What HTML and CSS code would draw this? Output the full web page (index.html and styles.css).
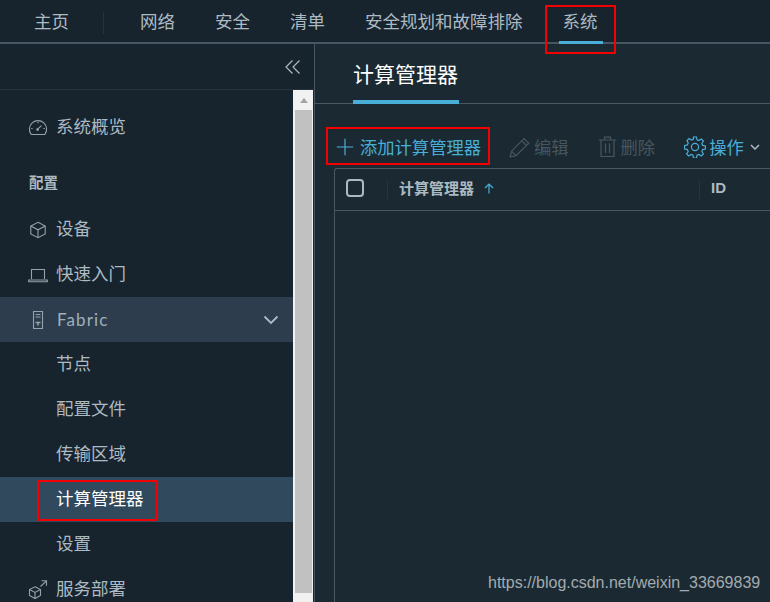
FILE: index.html
```html
<!DOCTYPE html>
<html lang="zh">
<head>
<meta charset="utf-8">
<title>计算管理器</title>
<link rel="stylesheet" href="styles.css">
</head>
<body>
<div class="app">
  <header class="topbar">
    <span class="topitem">主页</span>
    <span class="topdiv"></span>
    <nav class="topnav">
      <span class="topitem">网络</span>
      <span class="topitem">安全</span>
      <span class="topitem">清单</span>
      <span class="topitem">安全规划和故障排除</span>
      <span class="topitem active">系统</span>
    </nav>
  </header>
  <div class="main">
    <aside class="side">
      <div class="collapse">
        <svg class="collapse-icon" width="16" height="16" viewBox="0 0 16 16"><path d="M7.500 1.500 1 8l6.500 6.500M14.500 1.500 8 8l6.500 6.500"/></svg>
      </div>
      <div class="side-body">
        <nav class="sidenav">
          <div class="navrow first">
            <svg class="ico" width="20" height="20" viewBox="0 0 20 20"><path d="M3.200 16.500A8.600 8.600 0 1 1 16.800 16.500Z"/><path d="M8.800 11.800 13.500 7.600"/><circle cx="9.600" cy="11.600" r="1.300" class="fillc"/><path d="M3.200 10.500H4.600M15.400 10.500h1.400M10 4v1.200"/></svg>
            <span class="label">系统概览</span>
          </div>
          <div class="navlabel">配置</div>
          <div class="navrow">
            <svg class="ico" width="20" height="20" viewBox="0 0 20 20"><path d="M10 2.300 17.200 6v8L10 17.700 2.800 14V6Z"/><path d="M2.800 6 10 9.800 17.200 6M10 9.800v7.900"/></svg>
            <span class="label">设备</span>
          </div>
          <div class="navrow">
            <svg class="ico" width="20" height="20" viewBox="0 0 20 20"><path d="M3.500 14V4.500h13V14"/><path d="M.7 15h18.600v1.800H.7Z"/></svg>
            <span class="label">快速入门</span>
          </div>
          <div class="navrow open">
            <svg class="ico" width="20" height="20" viewBox="0 0 20 20"><path d="M5.500 1.500h9v17h-9Z"/><path d="M7.500 4.500h5M7.500 7h5"/><path d="M7.500 12.500h5M10 12.500v3" class="thick"/></svg>
            <span class="latin">Fabric</span>
            <svg class="chev" width="16" height="10" viewBox="0 0 16 10"><path d="M1.500 1.500 8 8l6.500-6.500"/></svg>
          </div>
          <div class="navrow sub"><span class="label">节点</span></div>
          <div class="navrow sub"><span class="label">配置文件</span></div>
          <div class="navrow sub"><span class="label">传输区域</span></div>
          <div class="navrow sub selected"><span class="label">计算管理器</span></div>
          <div class="navrow sub"><span class="label">设置</span></div>
          <div class="navrow">
            <svg class="ico" width="20" height="20" viewBox="0 0 20 20"><path d="M7 6.800 12.500 9.600V15.500L7 18.500 1.500 15.500V9.600Z"/><path d="M1.500 9.600 7 12.500 12.500 9.600M7 12.500v6"/><path d="M12.500 6.500 18.500.8M13.500.8h5v5"/></svg>
            <span class="label">服务部署</span>
          </div>
        </nav>
        <div class="scrollbar">
          <div class="scroll-arrow"></div>
          <div class="scroll-thumb"></div>
        </div>
      </div>
    </aside>
    <section class="content">
      <div class="tabs"><span class="tab">计算管理器</span></div>
      <div class="toolbar">
        <span class="tool primary add">
          <svg class="tool-ico" width="18" height="18" viewBox="0 0 18 18"><path d="M9 .8v16.400M.8 9h16.400"/></svg>
          <span>添加计算管理器</span>
        </span>
        <span class="tool disabled edit">
          <svg class="tool-ico" width="21" height="21" viewBox="0 0 21 21"><path d="M1.200 20 2.500 14.200 15 1.500 19.800 6.200 7 18.700Z"/><path d="M12.800 3.800 17.500 8.500M2.500 14.200 7 18.700"/></svg>
          <span>编辑</span>
        </span>
        <span class="tool disabled trash">
          <svg class="tool-ico" width="19" height="22" viewBox="0 0 19 22"><path d="M3 4.500V20.500h13V4.500M.8 4h17.400M6.500 4V1.200h6V4M7.500 7.500v9.500M11.500 7.500v9.500"/></svg>
          <span>删除</span>
        </span>
        <span class="tool primary ops">
          <svg class="tool-ico" width="22" height="22" viewBox="0 0 22 22"><circle cx="11" cy="11" r="3.600"/><path d="M9.500 1h3l.5 2.800 1.900.8 2.400-1.600 2.100 2.100-1.600 2.400.8 1.900 2.800.5v3.200l-2.800.5-.8 1.900 1.600 2.400-2.100 2.100-2.400-1.600-1.900.8-.5 2.800h-3l-.5-2.800-1.900-.8-2.400 1.600-2.100-2.100 1.600-2.400-.8-1.900-2.800-.5V9.400l2.800-.5.800-1.900L3 4.600 5.100 2.500l2.400 1.600 1.900-.8Z"/></svg>
          <span>操作</span>
          <svg class="ops-chev" width="10" height="6" viewBox="0 0 10 6"><path d="M1 1 5 5 9 1"/></svg>
        </span>
      </div>
      <div class="grid">
        <div class="grid-head">
          <span class="check-cell"><span class="check"></span></span>
          <span class="col col-name"><span class="col-text">计算管理器</span>
            <svg class="sort" width="10" height="11" viewBox="0 0 10 11"><path d="M5 10.500V1M1 5 5 1l4 4"/></svg>
          </span>
          <span class="col col-id"><span class="col-text">ID</span></span>
        </div>
      </div>
    </section>
  </div>

  <div class="mark mark-system"></div>
  <div class="mark mark-add"></div>
  <div class="mark mark-nav"></div>
  <div class="watermark">https://blog.csdn.net/weixin_33669839</div>
</div>
</body>
</html>
```

FILE: styles.css
```css
* { box-sizing: border-box; }
html, body { margin: 0; padding: 0; background: #1b2a32; }
body { font-family: "Noto Sans CJK SC", "Noto Sans", sans-serif; }

.app {
  position: relative;
  width: 770px;
  height: 602px;
  overflow: hidden;
  display: flex;
  flex-direction: column;
}

/* top bar */
.topbar {
  height: 44px;
  flex: none;
  display: flex;
  align-items: stretch;
  padding-left: 34px;
  background: #17232d;
  border-bottom: 2px solid #485764;
  font-size: 17.500px;
  color: #acbac3;
}
.topitem {
  display: flex;
  align-items: center;
  position: relative;
  height: 44px;
  line-height: 1;
  padding-bottom: 2px;
  white-space: nowrap;
}
.topdiv {
  width: 1px;
  height: 22px;
  margin: 12px 36px 0 34px;
  background: #26343f;
}
.topnav { display: flex; gap: 40px; }
.topitem.active::after {
  content: "";
  position: absolute;
  left: -4px;
  right: -5px;
  bottom: 0;
  height: 3px;
  background: #49afd9;
}

.main { flex: 1; min-height: 0; display: flex; }

/* side */
.side {
  width: 315px;
  flex: none;
  display: flex;
  flex-direction: column;
  background: #17232d;
  border-right: 1px solid #485764;
}
.collapse {
  height: 46px;
  flex: none;
  display: flex;
  justify-content: flex-end;
  padding: 15px 13px 0 0;
  border-bottom: 1px solid #26343f;
}
.collapse-icon { fill: none; stroke: #acbac3; stroke-width: 1.200; }
.side-body { flex: 1; min-height: 0; display: flex; }
.sidenav { width: 293px; flex: none; overflow: hidden; font-size: 17.500px; color: #acbac3; }
.navrow {
  height: 45px;
  display: flex;
  align-items: center;
  padding-left: 28px;
  line-height: 1;
  white-space: nowrap;
}
.navrow.first { margin-top: 15px; }
.label { margin-left: 8px; margin-bottom: 3px; }
.navrow.sub { padding-left: 48px; }
.navrow.open { background: #2d3d4d; }
.navrow.selected { background: #31495c; color: #fff; }
.navlabel {
  height: 57px;
  padding: 22px 0 0 29px;
  font-size: 14.500px;
  font-weight: 700;
  line-height: 20px;
  color: #acbac3;
}
.latin {
  margin-left: 9px;
  font-family: Lato, "Noto Sans", sans-serif;
  letter-spacing: 1.100px;
  font-size: 17px;
  color: #9fb0bb;
}
.ico { flex: none; fill: none; stroke: #95a3ab; stroke-width: 1.100; }
.ico .fillc { fill: #95a3ab; stroke: none; }
.ico .thick { stroke-width: 1.600; }
.chev {
  margin-left: auto;
  margin-right: 14px;
  fill: none;
  stroke: #acbac3;
  stroke-width: 1.800;
}

.scrollbar {
  width: 20px;
  flex: none;
  background: #f1f1f1;
  padding: 0 1px 0 2px;
}
.scroll-arrow {
  width: 0;
  height: 0;
  margin: 8px auto 7px;
  border-left: 4.500px solid transparent;
  border-right: 4.500px solid transparent;
  border-bottom: 5px solid #a3a3a3;
}
.scroll-thumb { height: 483px; background: #c1c1c1; }

/* content */
.content { flex: 1; min-width: 0; display: flex; flex-direction: column; background: #1b2a32; }
.tabs {
  height: 60px;
  flex: none;
  padding-left: 38px;
  border-bottom: 1px solid #485764;
  display: flex;
}
.tab {
  display: block;
  height: 60px;
  width: 106px;
  padding-top: 14px;
  font-size: 21px;
  line-height: 30px;
  color: #fff;
  border-bottom: 4px solid #49afd9;
  white-space: nowrap;
}
.toolbar {
  height: 64px;
  flex: none;
  display: flex;
  align-items: center;
  padding: 22px 0 0 21px;
  font-size: 17.300px;
  line-height: 1;
}
.tool { display: flex; align-items: center; white-space: nowrap; }
.tool-ico { flex: none; fill: none; stroke: currentColor; stroke-width: 1.200; }
.primary { color: #49afd9; }
.disabled { color: #46555f; }
.add { gap: 6px; }
.edit { gap: 4px; margin-left: 28px; }
.trash { gap: 4px; margin-left: 29px; }
.ops { gap: 3px; margin-left: 29px; }
.ops-chev { margin-left: 3px; fill: none; stroke: #acbac3; stroke-width: 1.500; }

.grid {
  flex: 1;
  margin-left: 19px;
  border: 1px solid #485764;
  border-right: 0;
  border-bottom: 0;
  border-top-left-radius: 3px;
}
.grid-head {
  height: 42px;
  display: flex;
  align-items: center;
  border-bottom: 1px solid #485764;
  font-size: 15px;
  font-weight: 700;
  line-height: 1;
  color: #acbac3;
}
.col-text { margin-bottom: 4px; }
.check-cell {
  width: 53px;
  height: 19px;
  flex: none;
  padding-left: 11px;
  border-right: 1px solid #26343f;
}
.check {
  display: block;
  width: 18px;
  height: 18px;
  margin-top: -1px;
  border: 2px solid #acbac3;
  border-radius: 4px;
}
.col {
  display: flex;
  align-items: center;
  height: 19px;
  padding-left: 11px;
}
.col-name { width: 312px; flex: none; border-right: 1px solid #26343f; }
.col-id { font-family: "Liberation Sans", sans-serif; }
.sort { margin-left: 10px; margin-bottom: 2px; fill: none; stroke: #49afd9; stroke-width: 1.200; }

/* annotations */
.mark { position: absolute; border: 2px solid #f40000; }
.mark-system { left: 545px; top: 5px; width: 71px; height: 49px; }
.mark-add { left: 326px; top: 127px; width: 164px; height: 38px; }
.mark-nav { left: 37px; top: 480px; width: 121px; height: 41px; }
.watermark {
  position: absolute;
  left: 488px;
  top: 573px;
  font-family: "Liberation Sans", sans-serif;
  font-size: 16px;
  line-height: 20px;
  color: #a3abb0;
  white-space: nowrap;
}
```
